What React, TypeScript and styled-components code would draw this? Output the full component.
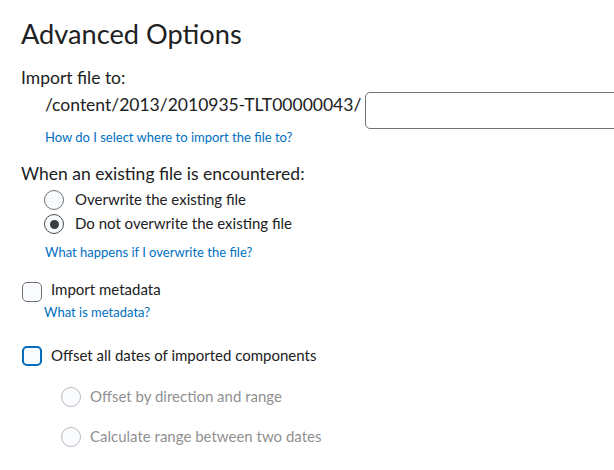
import React from 'react';
import styled, { createGlobalStyle } from 'styled-components';

const GlobalStyle = createGlobalStyle`
  body {
    margin: 0;
    background: #ffffff;
    font-family: Lato, "Open Sans", "Liberation Sans", sans-serif;
    color: #202122;
  }
`;

const Page = styled.div`
  padding: 18px 0 0 21px;
  height: 470px;
  box-sizing: border-box;
  overflow: hidden;
`;

const Title = styled.h1`
  margin: 0;
  font-size: 27.2px;
  font-weight: 400;
  line-height: 32px;
`;

const Heading = styled.div<{ $top: number }>`
  margin-top: ${p => p.$top}px;
  font-size: 17.5px;
  line-height: 22px;
`;

const PathRow = styled.div`
  display: flex;
  align-items: flex-start;
  margin-top: 3px;
  padding-left: 24px;
  gap: 4px;
`;

const PathText = styled.span`
  margin-top: 2px;
  font-size: 17.5px;
  line-height: 22px;
  white-space: nowrap;
`;

const PathInput = styled.input`
  flex: 0 0 auto;
  width: 300px;
  height: 37px;
  box-sizing: border-box;
  border: 1px solid #6e7477;
  border-radius: 5px;
  background: #fff;
  outline: none;
`;

const HelpLink = styled.a<{ $top: number; $indent: number }>`
  display: block;
  margin-top: ${p => p.$top}px;
  padding-left: ${p => p.$indent}px;
  font-size: 13px;
  line-height: 16px;
  color: #006fbf;
  text-decoration: none;
`;

const OptionGroup = styled.div<{ $top: number; $indent: number; $gap: number }>`
  display: flex;
  flex-direction: column;
  gap: ${p => p.$gap}px;
  margin-top: ${p => p.$top}px;
  padding-left: ${p => p.$indent}px;
`;

const OptionRow = styled.label<{ $disabled?: boolean; $space: number }>`
  display: flex;
  align-items: center;
  gap: ${p => p.$space}px;
  min-height: 24px;
  font-size: 15px;
  line-height: 18px;
  opacity: ${p => (p.$disabled ? 0.5 : 1)};
`;

const Radio = styled.span<{ $checked?: boolean }>`
  position: relative;
  flex: 0 0 auto;
  width: 20px;
  height: 20px;
  box-sizing: border-box;
  border-radius: 50%;
  border: 1px solid ${p => (p.$checked ? '#494c4e' : '#6e7376')};
  background: #f9fbff;
  margin-top: 2px;

  &::after {
    content: '';
    display: ${p => (p.$checked ? 'block' : 'none')};
    position: absolute;
    left: 50%;
    top: 50%;
    width: 9px;
    height: 9px;
    margin: -4.5px 0 0 -4.5px;
    border-radius: 50%;
    background: #3a3d3f;
  }
`;

const CheckRow = styled.label<{ $top: number }>`
  display: flex;
  align-items: flex-start;
  gap: 9px;
  margin-top: ${p => p.$top}px;
  padding-left: 1px;
  font-size: 15px;
  line-height: 18px;
`;

const Checkbox = styled.span<{ $focused?: boolean; $offset: number }>`
  flex: 0 0 auto;
  width: 20px;
  height: 20px;
  box-sizing: border-box;
  margin-top: ${p => p.$offset}px;
  border-radius: 5px;
  border: ${p => (p.$focused ? '2px solid #006fbf' : '1px solid #6e7376')};
  background: #f9fbff;
`;

export default function App() {
  return (
    <>
      <GlobalStyle />
      <Page>
        <Title>Advanced Options</Title>

        <Heading $top={17}>Import file to:</Heading>
        <PathRow>
          <PathText>/content/2013/2010935-TLT00000043/</PathText>
          <PathInput type="text" />
        </PathRow>
        <HelpLink href="#" $top={0} $indent={24}>
          How do I select where to import the file to?
        </HelpLink>

        <Heading $top={18}>When an existing file is encountered:</Heading>
        <OptionGroup $top={2} $indent={23} $gap={0}>
          <OptionRow $space={11}>
            <Radio />
            Overwrite the existing file
          </OptionRow>
          <OptionRow $space={11}>
            <Radio $checked />
            Do not overwrite the existing file
          </OptionRow>
        </OptionGroup>
        <HelpLink href="#" $top={9} $indent={24}>
          What happens if I overwrite the file?
        </HelpLink>

        <CheckRow $top={20}>
          <Checkbox $offset={2} />
          Import metadata
        </CheckRow>
        <HelpLink href="#" $top={2} $indent={23}>
          What is metadata?
        </HelpLink>

        <CheckRow $top={26}>
          <Checkbox $focused $offset={0} />
          Offset all dates of imported components
        </CheckRow>
        <OptionGroup $top={18} $indent={40} $gap={16}>
          <OptionRow $disabled $space={9}>
            <Radio />
            Offset by direction and range
          </OptionRow>
          <OptionRow $disabled $space={9}>
            <Radio />
            Calculate range between two dates
          </OptionRow>
        </OptionGroup>
      </Page>
    </>
  );
}
